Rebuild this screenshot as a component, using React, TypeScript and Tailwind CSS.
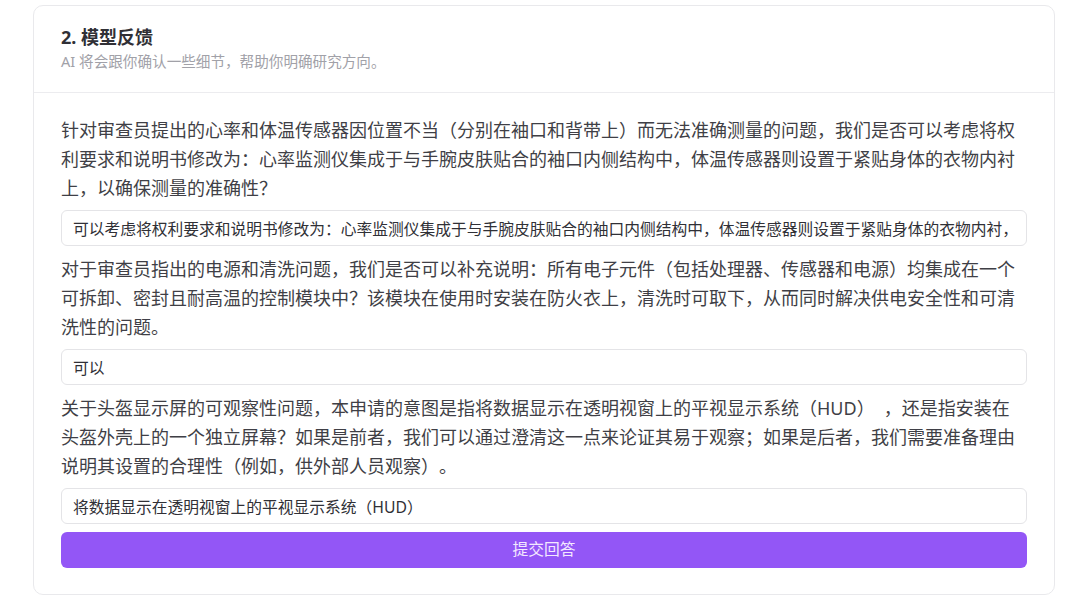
import { useState } from "react";

const questions = [
  {
    q: "针对审查员提出的心率和体温传感器因位置不当（分别在袖口和背带上）而无法准确测量的问题，我们是否可以考虑将权利要求和说明书修改为：心率监测仪集成于与手腕皮肤贴合的袖口内侧结构中，体温传感器则设置于紧贴身体的衣物内衬上，以确保测量的准确性？",
    a: "可以考虑将权利要求和说明书修改为：心率监测仪集成于与手腕皮肤贴合的袖口内侧结构中，体温传感器则设置于紧贴身体的衣物内衬，以确保测量的准确性。",
  },
  {
    q: "对于审查员指出的电源和清洗问题，我们是否可以补充说明：所有电子元件（包括处理器、传感器和电源）均集成在一个可拆卸、密封且耐高温的控制模块中？该模块在使用时安装在防火衣上，清洗时可取下，从而同时解决供电安全性和可清洗性的问题。",
    a: "可以",
  },
  {
    q: "关于头盔显示屏的可观察性问题，本申请的意图是指将数据显示在透明视窗上的平视显示系统（HUD）\u2002，还是指安装在头盔外壳上的一个独立屏幕？如果是前者，我们可以通过澄清这一点来论证其易于观察；如果是后者，我们需要准备理由说明其设置的合理性（例如，供外部人员观察）。",
    a: "将数据显示在透明视窗上的平视显示系统（HUD）",
  },
];

export default function App() {
  const [answers, setAnswers] = useState(questions.map((item) => item.a));

  return (
    <div
      className="min-h-[595px] w-[1080px] bg-white pt-[5px] pl-[33px] [text-spacing-trim:space-all]"
      style={{ fontFamily: '"Noto Sans", "Noto Sans CJK SC", sans-serif' }}
    >
      <div className="w-[1022px] rounded-[10px] border border-[#e9e9ec] bg-white">
        {/* Header */}
        <div className="border-b border-[#ececef] px-[27px] pt-[18px] pb-[21px]">
          <h2 className="text-[18px] font-bold leading-[27px] text-[#303036]">
            2. 模型反馈
          </h2>
          <p className="text-[14.6px] leading-[20px] text-[#a1a1a8]">
            AI 将会跟你确认一些细节，帮助你明确研究方向。
          </p>
        </div>

        {/* Questions */}
        <div className="px-[27px] pt-[23px] pb-[26px]">
          {questions.map((item, i) => (
            <div key={i} className="mb-[9px]">
              <p className="mb-[7px] text-[18px] leading-[29px] text-[#3f3f46]">
                {item.q}
              </p>
              <input
                value={answers[i]}
                onChange={(e) =>
                  setAnswers(answers.map((v, j) => (j === i ? e.target.value : v)))
                }
                className="block h-[36px] w-full rounded-[6px] border border-[#e4e4e7] bg-white px-[11px] text-[15.75px] text-[#303036] outline-none"
              />
            </div>
          ))}

          <button className="-mt-[1px] flex h-[36px] w-full items-center justify-center rounded-[6px] bg-[#9356f6] text-[15.75px] text-[#f3e8ff]">
            提交回答
          </button>
        </div>
      </div>
    </div>
  );
}
